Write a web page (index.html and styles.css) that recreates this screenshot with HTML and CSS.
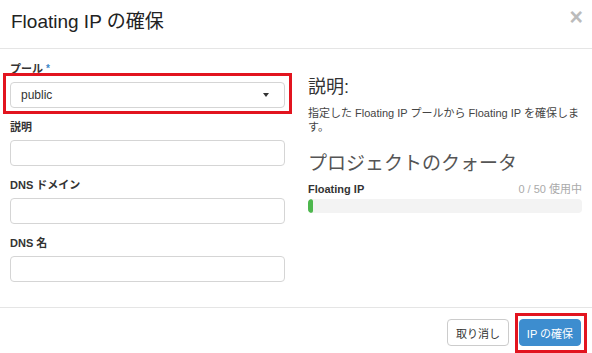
FILE: index.html
```html
<!DOCTYPE html>
<html lang="ja">
<head>
    <meta charset="UTF-8">
    <meta name="viewport" content="width=device-width, initial-scale=1.0">
    <title>Floating IP の確保</title>
    <link rel="stylesheet" href="styles.css">
</head>
<body>
    <div class="modal">
        <div class="modal-header">
            <h1>Floating IP の確保</h1>
            <span class="close">&times;</span>
        </div>
        <div class="modal-body">
            <form class="form-col">
                <div class="form-group">
                    <label for="pool">プール <span class="req">*</span></label>
                    <div class="marked">
                        <div class="select" id="pool">
                            <span>public</span>
                            <span class="caret"></span>
                        </div>
                    </div>
                </div>
                <div class="form-group">
                    <label for="desc">説明</label>
                    <input type="text" id="desc">
                </div>
                <div class="form-group">
                    <label for="domain">DNS ドメイン</label>
                    <input type="text" id="domain">
                </div>
                <div class="form-group">
                    <label for="dnsname">DNS 名</label>
                    <input type="text" id="dnsname">
                </div>
            </form>
            <div class="help-col">
                <h3>説明:</h3>
                <p>指定した Floating IP プールから Floating IP を確保します。</p>
                <h3 class="quota-title">プロジェクトのクォータ</h3>
                <div class="quota-row">
                    <strong>Floating IP</strong>
                    <span class="quota-used">0 / 50 使用中</span>
                </div>
                <div class="progress">
                    <div class="progress-bar" style="width: 2%"></div>
                </div>
            </div>
        </div>
        <div class="modal-footer">
            <button class="btn">取り消し</button>
            <span class="marked marked-btn">
                <button class="btn btn-primary">IP の確保</button>
            </span>
        </div>
    </div>
</body>
</html>
```
FILE: styles.css
```css
body {
    margin: 0;
    background: #fff;
    font-family: "Liberation Sans", "Noto Sans CJK JP", sans-serif;
    color: #333;
}

.modal {
    width: 592px;
    height: 353px;
    display: flex;
    flex-direction: column;
}

.modal-header {
    height: 48px;
    border-bottom: 1px solid #e5e5e5;
    display: flex;
    justify-content: space-between;
    align-items: flex-start;
    padding: 0 9px 0 11px;
}

.modal-header h1 {
    margin: 10px 0 0;
    font-size: 19px;
    font-weight: normal;
    color: #222;
    line-height: 24px;
}

.close {
    margin-top: 5px;
    font-size: 23px;
    font-weight: bold;
    color: #bbb;
    line-height: 24px;
}

.modal-body {
    display: grid;
    grid-template-columns: 275px 274px;
    column-gap: 23px;
    padding: 13px 10px 0;
    height: 245px;
    border-bottom: 1px solid #e5e5e5;
}

.form-group {
    margin-bottom: 12px;
}

.form-group label {
    display: block;
    font-size: 11px;
    font-weight: bold;
    line-height: 14px;
    margin-bottom: 6px;
    color: #333;
}

.req {
    color: #3a87c8;
    font-size: 10px;
    vertical-align: top;
}

.form-group input,
.select {
    box-sizing: border-box;
    width: 100%;
    height: 26px;
    border: 1px solid #d5d5d5;
    border-radius: 4px;
    font-size: 12px;
    font-family: inherit;
    padding: 0 10px;
}

.select {
    display: flex;
    justify-content: space-between;
    align-items: center;
    color: #333;
}

.caret {
    width: 0;
    height: 0;
    border-left: 3px solid transparent;
    border-right: 3px solid transparent;
    border-top: 4px solid #333;
    margin-right: 5px;
}

/* red annotation frames */
.marked {
    position: relative;
    display: block;
}

.marked::after {
    content: "";
    position: absolute;
    top: -9px;
    left: -7px;
    right: -7px;
    bottom: -6px;
    border: 3px solid #e2141f;
}

.help-col h3 {
    margin: 14px 0 0;
    font-size: 18px;
    font-weight: normal;
    line-height: 22px;
    color: #333;
}

.help-col p {
    margin: 8px 0 0;
    font-size: 11px;
    line-height: 14px;
    color: #444;
}

.help-col .quota-title {
    margin-top: 18px;
    font-size: 19px;
    line-height: 24px;
    color: #555;
}

.quota-row {
    display: flex;
    justify-content: space-between;
    font-size: 11px;
    margin-top: 6px;
    line-height: 14px;
}

.quota-used {
    color: #aaa;
}

.progress {
    margin-top: 3px;
    height: 14px;
    background: #f3f3f3;
    border-radius: 4px;
    overflow: hidden;
}

.progress-bar {
    height: 100%;
    background: #4db74d;
    border-radius: 4px;
}

.modal-footer {
    display: flex;
    justify-content: flex-end;
    align-items: flex-start;
    gap: 10px;
    padding: 11px 11px 0;
}

.btn {
    height: 27px;
    width: 62px;
    padding: 0;
    border: 1px solid #ccc;
    border-radius: 4px;
    background: #fff;
    color: #333;
    font-size: 11px;
    font-family: inherit;
}

.btn-primary {
    background: #3d8dcf;
    border-color: #3d8dcf;
    color: #fff;
}

.marked-btn::after {
    top: -6px;
    left: -4px;
    right: -6px;
    bottom: -7px;
}
```
